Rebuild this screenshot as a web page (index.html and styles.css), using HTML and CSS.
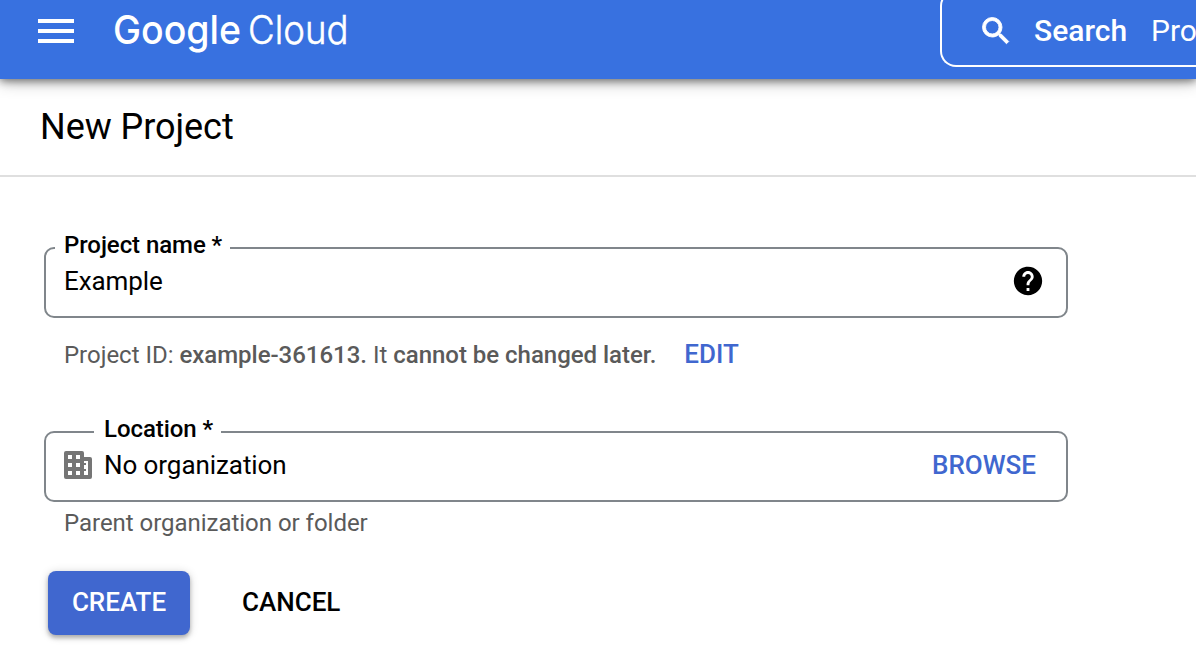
FILE: index.html
```html
<!DOCTYPE html>
<html lang="en">
<head>
<meta charset="utf-8">
<title>New Project – Google Cloud</title>
<link rel="stylesheet" href="styles.css">
</head>
<body>
<header class="topbar">
  <button class="menu" aria-label="Menu"><span></span><span></span><span></span></button>
  <svg class="logo" width="260" height="60" viewBox="0 0 260 60" role="img" aria-label="Google Cloud">
    <text class="logo-google" x="-1" y="44" textLength="128" lengthAdjust="spacingAndGlyphs">Google</text>
    <text class="logo-cloud" x="134" y="44" textLength="100.500" lengthAdjust="spacingAndGlyphs">Cloud</text>
  </svg>
  <div class="search">
    <svg class="search-icon" width="36" height="36" viewBox="0 0 24 24"><path d="M15.500 14h-.79l-.28-.27A6.470 6.470 0 0 0 16 9.500 6.500 6.500 0 1 0 9.500 16c1.610 0 3.090-.590 4.230-1.570l.27.28v.79l5 4.990L20.490 19l-4.990-5zm-6 0a4.500 4.500 0 1 1 0-9 4.500 4.500 0 0 1 0 9z"/></svg>
    <span class="search-label">Search</span>
    <span class="search-hint">Products</span>
  </div>
</header>
<div class="titlebar"><h1>New Project</h1></div>
<main>
  <fieldset class="field">
    <legend>Project name *</legend>
    <div class="row">
      <span class="value">Example</span>
      <svg class="help" width="34" height="34" viewBox="0 0 24 24"><path d="M12 2C6.480 2 2 6.480 2 12s4.480 10 10 10 10-4.480 10-10S17.520 2 12 2zm1 17h-2v-2h2v2zm2.070-7.750-.9.920C13.450 12.900 13 13.500 13 15h-2v-.5c0-1.100.45-2.100 1.170-2.830l1.240-1.260c.37-.36.59-.86.59-1.410 0-1.100-.9-2-2-2s-2 .9-2 2H8c0-2.210 1.790-4 4-4s4 1.790 4 4c0 .88-.36 1.680-.93 2.250z"/></svg>
    </div>
  </fieldset>
  <div class="note"><span>Project ID: <b class="pid">example-361613.</b> It <b>cannot be changed later.</b></span><a class="link">EDIT</a></div>
  <fieldset class="field location">
    <legend>Location *</legend>
    <div class="row">
      <svg class="org" width="28" height="28" viewBox="0 0 28 28"><path fill-rule="evenodd" d="M2 0H18Q20 0 20 2V6H26Q28 6 28 8V26Q28 28 26 28H2Q0 28 0 26V2Q0 0 2 0ZM4 4V8H8V4ZM12 4V8H16V4ZM4 12V16H8V12ZM12 12V16H16V12ZM4 20V24H8V20ZM12 20V24H16V20ZM20 10V12H22V14H20V18H22V20H20V24H24V10Z"/></svg>
      <span class="value">No organization</span>
      <a class="link browse">BROWSE</a>
    </div>
  </fieldset>
  <div class="hint">Parent organization or folder</div>
  <div class="actions"><button class="create">CREATE</button><button class="cancel">CANCEL</button></div>
</main>
</body>
</html>
```
FILE: styles.css
```css
* { box-sizing: border-box; }
body { margin: 0; height: 662px; overflow: hidden; background: #fff; color: #000; font-family: Roboto, sans-serif; }
button { border: 0; padding: 0; background: none; font: inherit; color: inherit; }
.topbar { position: relative; display: flex; align-items: flex-start; height: 79px; background: #3871e0; color: #fff; box-shadow: 0 2px 16px rgba(0,0,0,.3), 0 2px 8px rgba(0,0,0,.45); }
.menu { display: flex; flex-direction: column; gap: 6px; width: 36px; margin: 19px 0 0 38px; flex: none; }
.menu span { height: 4px; background: #fff; }
.logo { flex: none; margin-left: 40px; fill: #fff; font-family: Inter, sans-serif; font-size: 40px; }
.logo-google { font-weight: 500; }
.logo-cloud { font-weight: 300; stroke: #fff; stroke-width: .5px; }
.search { display: flex; align-items: center; width: 256px; height: 77px; margin: -10px 0 0 auto; padding: 4px 0 0 35px; border: 2px solid #fff; border-right: 0; border-radius: 16px 0 0 16px; overflow: hidden; white-space: nowrap; font-size: 30px; flex: none; }
.search-icon { flex: none; margin: 0 -1px 0 1px; fill: #fff; stroke: #fff; stroke-width: .6px; }
.search-label { margin-left: 21px; font-weight: 500; }
.search-hint { margin-left: 24px; font-weight: 400; }
.titlebar { display: flex; align-items: center; height: 98px; padding: 0 40px 1px; border-bottom: 2px solid #dfdfdf; }
h1 { margin: 0; font-size: 36px; line-height: 44px; font-weight: 400; letter-spacing: -.05px; }
main { width: 1068px; padding: 53px 0 0 44px; }
.field { height: 88px; margin: 0; padding: 0 24px 0 18px; min-width: 0; border: 2px solid #80868b; border-radius: 10px; }
.field legend { height: 36px; margin-left: -9px; padding: 1px 8px 7px 9px; font-size: 24px; line-height: 28px; font-weight: 500; letter-spacing: -.07px; }
.row { display: flex; align-items: center; height: 30px; }
.value { font-size: 26px; line-height: 30px; letter-spacing: -.07px; }
.help { margin: 0 -3px 0 auto; }
.link { color: #4067cf; font-size: 26px; font-weight: 500; }
.note { display: flex; align-items: center; height: 30px; margin: 22px 0 0 20px; color: #5a5a5a; font-size: 24px; letter-spacing: -.02px; white-space: nowrap; }
.note b { font-weight: 500; }
.note .link { margin: -2px 0 0 28px; }
.location { margin-top: 44px; }
.location legend { margin-left: 30px; padding-left: 10px; padding-right: 8px; }
.org { flex: none; margin-right: 12px; fill: #757575; }
.browse { margin-left: auto; margin-right: 6px; }
.hint { margin: 6px 0 0 20px; height: 30px; color: #5a5a5a; font-size: 24px; line-height: 30px; letter-spacing: -.03px; }
.actions { display: flex; align-items: center; gap: 52px; margin: 33px 0 0 4px; font-size: 26px; font-weight: 500; }
.actions button { padding-bottom: 2px; }
.create { width: 142px; height: 64px; color: #fff; background: #4067cf; border-radius: 8px; box-shadow: 0 3px 4px rgba(0,0,0,.26), 0 1px 10px rgba(0,0,0,.16); }
```
